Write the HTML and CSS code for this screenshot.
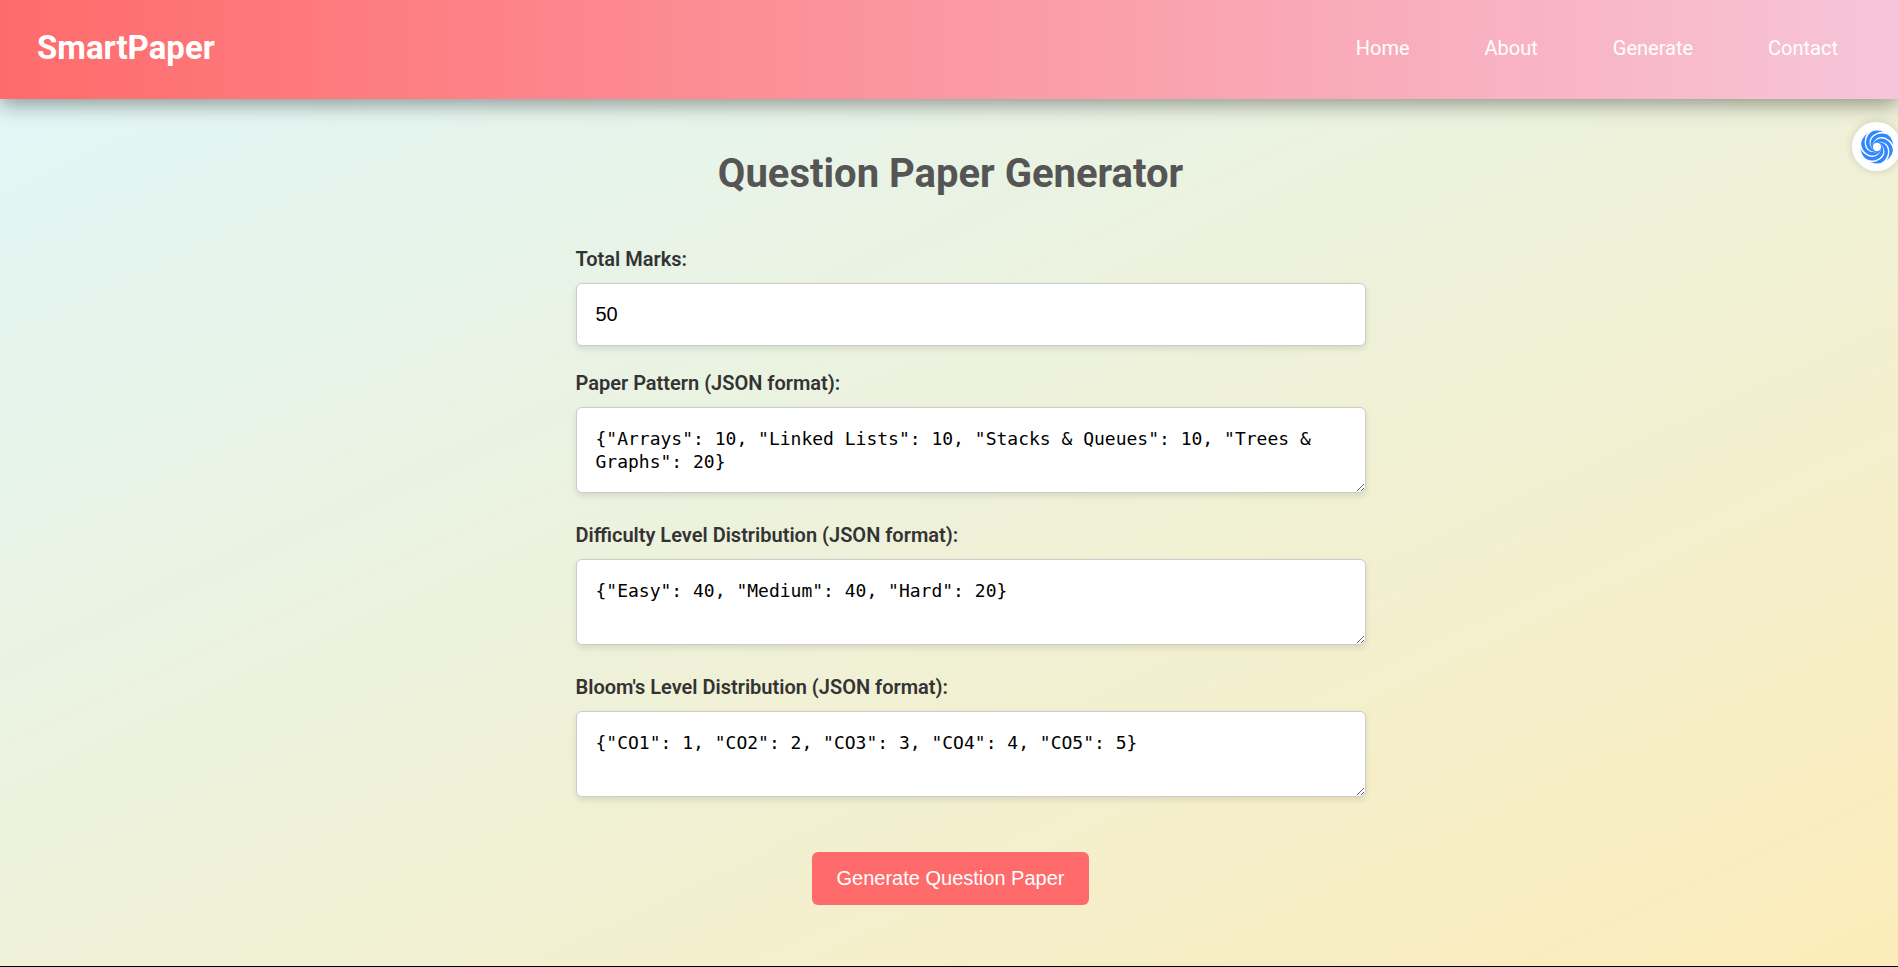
FILE: index.html
```html
<!DOCTYPE html>
<html lang="en">
<head>
<meta charset="utf-8">
<title>SmartPaper</title>
<link rel="stylesheet" href="styles.css">
</head>
<body>
<header class="site-header">
  <div class="logo">SmartPaper</div>
  <nav class="nav">
    <a href="#home">Home</a>
    <a href="#about">About</a>
    <a href="#generate">Generate</a>
    <a href="#contact">Contact</a>
  </nav>
</header>
<main class="main">
  <h1 class="title">Question Paper Generator</h1>
  <form class="form">
    <div class="field">
      <label for="marks">Total Marks:</label>
      <input id="marks" type="text" inputmode="numeric" value="50">
    </div>
    <div class="field">
      <label for="pattern">Paper Pattern (JSON format):</label>
      <textarea id="pattern" rows="2" spellcheck="false">{"Arrays": 10, "Linked Lists": 10, "Stacks &amp; Queues": 10, "Trees &amp; Graphs": 20}</textarea>
    </div>
    <div class="field">
      <label for="difficulty">Difficulty Level Distribution (JSON format):</label>
      <textarea id="difficulty" rows="2" spellcheck="false">{"Easy": 40, "Medium": 40, "Hard": 20}</textarea>
    </div>
    <div class="field">
      <label for="bloom">Bloom's Level Distribution (JSON format):</label>
      <textarea id="bloom" rows="2" spellcheck="false">{"CO1": 1, "CO2": 2, "CO3": 3, "CO4": 4, "CO5": 5}</textarea>
    </div>
    <button class="submit" type="button">Generate Question Paper</button>
  </form>
</main>
<button class="assistant" type="button" aria-label="Open assistant">
  <svg width="34" height="34" viewBox="-17 -17 34 34" fill="#fff" aria-hidden="true">
    <defs><path id="gap" d="M-3.500 3.500C-8.800-3-6.500-10.500 1-12.900C6-14.300 10.500-13 13.300-10.300L14.500-12C9-16.300 4-15.700 0-14C-9-10.500-9.400-2.500-3.500 3.500Z"/></defs>
    <circle r="16.500" fill="#2f86ff"/>
    <circle r="4.200"/>
    <use href="#gap"/>
    <use href="#gap" transform="rotate(60)"/>
    <use href="#gap" transform="rotate(120)"/>
    <use href="#gap" transform="rotate(180)"/>
    <use href="#gap" transform="rotate(240)"/>
    <use href="#gap" transform="rotate(300)"/>
  </svg>
</button>
</body>
</html>
```
FILE: styles.css
```css
* {
  box-sizing: border-box;
}

body {
  margin: 0;
  min-height: 100vh;
  overflow-x: hidden;
  border-bottom: 1px solid #000;
  background: linear-gradient(155deg, #e0f7fa, #fcecba);
  color: #333;
  font-family: Roboto, sans-serif;
}

.site-header {
  display: flex;
  align-items: center;
  justify-content: space-between;
  padding: 26px 60px 30px 37px;
  background: linear-gradient(90deg, #ff6b6b, #f7c5d9);
  box-shadow: 0 5px 20px rgba(0, 0, 0, 0.4);
  color: #fff;
}

.logo {
  font-size: 33px;
  line-height: 43px;
  font-weight: 700;
}

.nav {
  display: flex;
  gap: 75px;
}

.nav a {
  color: #fff;
  font-size: 20px;
  line-height: 24px;
  text-decoration: none;
}

.main {
  display: flex;
  flex-direction: column;
  align-items: center;
  padding: 51px 0 60px 3px;
}

.title {
  margin: 0 0 49px;
  color: #555;
  font-size: 40px;
  line-height: 48px;
  font-weight: 700;
}

.form {
  display: flex;
  flex-direction: column;
  width: 750px;
  max-width: 90%;
}

.field {
  display: flex;
  flex-direction: column;
  align-items: flex-start;
  margin-bottom: 25px;
}

.field label {
  margin-bottom: 12px;
  font-size: 20px;
  line-height: 24px;
  font-weight: 600;
}

.field input,
.field textarea {
  box-sizing: content-box;
  width: 100%;
  padding: 19px;
  border: 1px solid #ccc;
  border-radius: 6px;
  background: #fff;
  box-shadow: 0 3px 6px rgba(0, 0, 0, 0.1);
  color: #000;
}

.field input {
  height: 23px;
  font: 20px/23px "Liberation Sans", Arial, sans-serif;
}

.field textarea {
  height: 46px;
  margin-bottom: 5px;
  font: 18px/23px Consolas, "DejaVu Sans Mono", monospace;
}

.submit {
  align-self: center;
  margin-top: 25px;
  padding: 15px 25px;
  border: 0;
  border-radius: 6px;
  background: #ff6b6b;
  color: #fff;
  font: 20px/23px "Liberation Sans", Arial, sans-serif;
}

.assistant {
  position: fixed;
  top: 122px;
  right: -3px;
  display: grid;
  place-items: center;
  width: 49px;
  height: 49px;
  padding: 0;
  border: 0;
  border-radius: 50%;
  background: #fff;
  box-shadow: 0 0 8px rgba(0, 0, 0, 0.15);
}
```
